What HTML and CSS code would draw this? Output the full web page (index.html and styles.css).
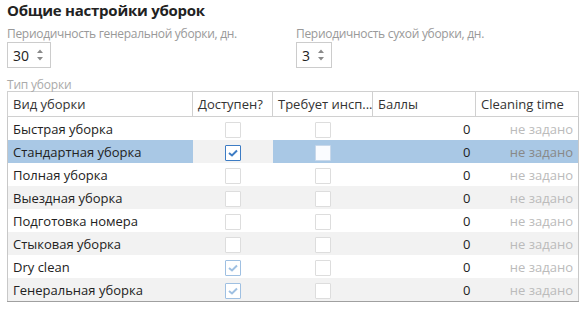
FILE: index.html
```html
<!DOCTYPE html>
<html lang="ru">
<head>
  <meta charset="UTF-8">
  <title>Общие настройки уборок</title>
  <link rel="stylesheet" href="styles.css">
</head>
<body>
  <h1 class="title">Общие настройки уборок</h1>

  <div class="fields">
    <div class="field field-general">
      <label class="field-label">Периодичность генеральной уборки, дн.</label>
      <div class="spin">
        <span class="spin-value">30</span>
        <svg class="spin-arrows" width="8" height="14" viewBox="0 0 8 14"><path d="M1 5 L4 1.5 L7 5 Z M1 9 L4 12.5 L7 9 Z" fill="#8a8a8a"/></svg>
      </div>
    </div>
    <div class="field">
      <label class="field-label">Периодичность сухой уборки, дн.</label>
      <div class="spin">
        <span class="spin-value">3</span>
        <svg class="spin-arrows" width="8" height="14" viewBox="0 0 8 14"><path d="M1 5 L4 1.5 L7 5 Z M1 9 L4 12.5 L7 9 Z" fill="#8a8a8a"/></svg>
      </div>
    </div>
  </div>

  <div class="group-label">Тип уборки</div>

  <table class="grid">
    <colgroup>
      <col class="c-name"><col class="c-avail"><col class="c-insp"><col class="c-score"><col class="c-time">
    </colgroup>
    <thead>
      <tr>
        <th>Вид уборки</th>
        <th>Доступен?</th>
        <th>Требует инсп...</th>
        <th>Баллы</th>
        <th>Cleaning time</th>
      </tr>
    </thead>
    <tbody>
      <tr>
        <td>Быстрая уборка</td>
        <td class="chk"><span class="box"></span></td>
        <td class="chk"><span class="box"></span></td>
        <td class="num">0</td>
        <td class="time">не задано</td>
      </tr>
      <tr class="selected">
        <td>Стандартная уборка</td>
        <td class="chk focus"><span class="box checked"><svg width="10" height="8" viewBox="0 0 10 8"><path d="M1 4 L4 6.5 L9 1.5" fill="none" stroke="#3d7cc4" stroke-width="2"/></svg></span></td>
        <td class="chk"><span class="box"></span></td>
        <td class="num">0</td>
        <td class="time">не задано</td>
      </tr>
      <tr>
        <td>Полная уборка</td>
        <td class="chk"><span class="box"></span></td>
        <td class="chk"><span class="box"></span></td>
        <td class="num">0</td>
        <td class="time">не задано</td>
      </tr>
      <tr>
        <td>Выездная уборка</td>
        <td class="chk"><span class="box"></span></td>
        <td class="chk"><span class="box"></span></td>
        <td class="num">0</td>
        <td class="time">не задано</td>
      </tr>
      <tr>
        <td>Подготовка номера</td>
        <td class="chk"><span class="box"></span></td>
        <td class="chk"><span class="box"></span></td>
        <td class="num">0</td>
        <td class="time">не задано</td>
      </tr>
      <tr>
        <td>Стыковая уборка</td>
        <td class="chk"><span class="box"></span></td>
        <td class="chk"><span class="box"></span></td>
        <td class="num">0</td>
        <td class="time">не задано</td>
      </tr>
      <tr>
        <td>Dry clean</td>
        <td class="chk"><span class="box checked-off"><svg width="10" height="8" viewBox="0 0 10 8"><path d="M1 4 L4 6.5 L9 1.5" fill="none" stroke="#9fc0e2" stroke-width="2"/></svg></span></td>
        <td class="chk"><span class="box"></span></td>
        <td class="num">0</td>
        <td class="time">не задано</td>
      </tr>
      <tr>
        <td>Генеральная уборка</td>
        <td class="chk"><span class="box checked-off"><svg width="10" height="8" viewBox="0 0 10 8"><path d="M1 4 L4 6.5 L9 1.5" fill="none" stroke="#9fc0e2" stroke-width="2"/></svg></span></td>
        <td class="chk"><span class="box"></span></td>
        <td class="num">0</td>
        <td class="time">не задано</td>
      </tr>
    </tbody>
  </table>
</body>
</html>
```

FILE: styles.css
```css
body {
  font-family: "Open Sans", "Noto Sans", sans-serif;
  color: #222;
  background-color: #fff;
  margin: 0;
  padding: 0 7px;
}

.title {
  font-size: 15px;
  font-weight: bold;
  line-height: 20px;
  letter-spacing: -0.25px;
  margin: 0;
}

.fields {
  display: flex;
  margin-top: 6px;
}

.field-general {
  width: 289px;
}

.field-label {
  display: block;
  font-size: 12px;
  line-height: 16px;
  letter-spacing: -0.3px;
  color: #999;
}

.spin {
  display: flex;
  align-items: center;
  box-sizing: border-box;
  height: 26px;
  padding: 0 6px 0 5px;
  border: 1px solid #ccc;
  width: fit-content;
  gap: 7px;
}

.spin-value {
  font-size: 14px;
}

.spin-arrows {
  display: block;
}

.group-label {
  font-size: 12px;
  line-height: 13px;
  letter-spacing: -0.2px;
  color: #aaa;
  margin-top: 10px;
}

.grid {
  border-collapse: collapse;
  width: 571px;
  table-layout: fixed;
  font-size: 13px;
  border: 1px solid #c8c8c8;
  border-bottom-color: #a0a0a0;
}

.c-name { width: 185px; }
.c-avail { width: 80px; }
.c-insp { width: 100px; }
.c-score { width: 103px; }
.c-time { width: 103px; }

th {
  font-weight: normal;
  text-align: left;
  color: #333;
  height: 24px;
  padding: 0 5px;
  border: 1px solid #d0d0d0;
  white-space: nowrap;
  overflow: hidden;
}

td {
  height: 23px;
  padding: 0 5px;
  white-space: nowrap;
}

tbody tr:nth-child(even) {
  background-color: #f2f2f2;
}

tbody tr.selected {
  background-color: #a9c8e5;
}

tr.selected td.focus {
  background-color: #f2f2f2;
}

.chk {
  text-align: center;
}

.box {
  display: inline-flex;
  align-items: center;
  justify-content: center;
  box-sizing: border-box;
  width: 16px;
  height: 16px;
  border: 1px solid #ddd;
  background-color: #fff;
  vertical-align: middle;
  border-radius: 1px;
}

.box.checked {
  border-color: #3d7cc4;
}

.box.checked-off {
  border-color: #9fc0e2;
}

.selected .box {
  background-color: #fafcff;
  border-color: #c8d8ea;
}

.selected .box.checked {
  background-color: #fff;
  border-color: #3d7cc4;
}

.num {
  text-align: right;
}

.time {
  text-align: right;
  color: #bbb;
}

.selected .time {
  color: #888;
}
```
